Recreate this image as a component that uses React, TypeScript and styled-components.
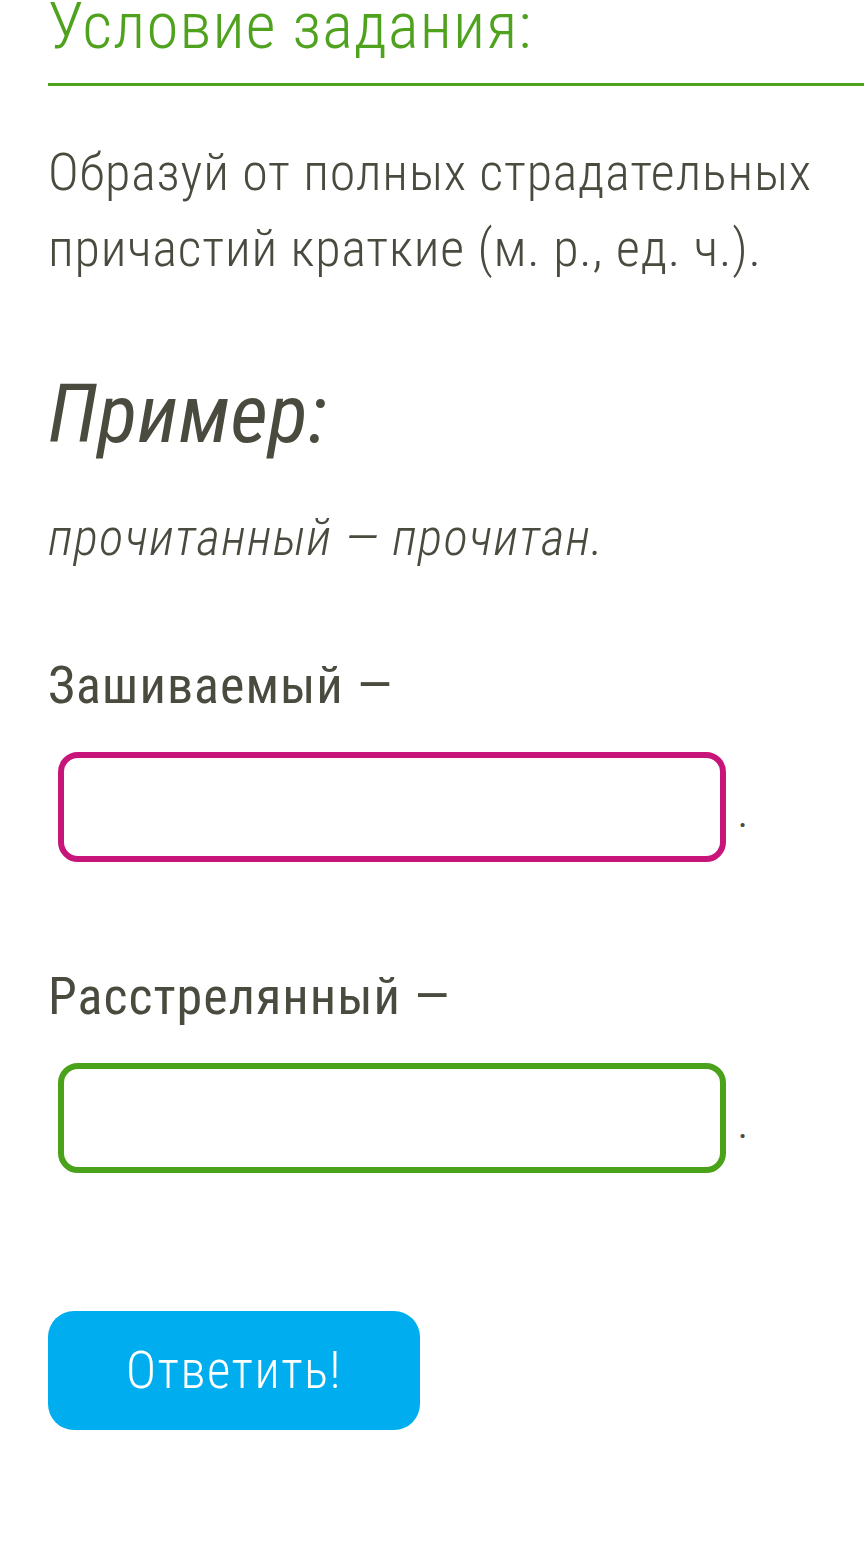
import React from "react";
import styled, { createGlobalStyle } from "styled-components";

const GlobalStyle = createGlobalStyle`
    body {
        margin: 0;
        background: #ffffff;
        font-family: "Roboto Condensed", "Liberation Sans Narrow", Roboto, sans-serif;
        color: #4a4a3f;
        letter-spacing: 1.2px;
    }
`;

const Page = styled.div`
    padding: 0 0 40px 48px;
    display: flex;
    flex-direction: column;
    align-items: flex-start;
`;

const Title = styled.h1`
    align-self: stretch;
    margin: -14px 0 0;
    padding-bottom: 17px;
    font-weight: 300;
    font-size: 65px;
    line-height: 80px;
    letter-spacing: 1.1px;
    color: #4fa21e;
    border-bottom: 3px solid #4fa21e;
`;

const Task = styled.p`
    margin: 49px 0 0;
    font-size: 52px;
    font-weight: 300;
    line-height: 76px;
    letter-spacing: 0.85px;
`;

const ExampleHead = styled.h2`
    margin: 79px 0 0;
    font-size: 82px;
    font-weight: 400;
    font-style: italic;
    line-height: 96px;
    letter-spacing: 0.5px;
`;

const ExampleText = styled.p`
    margin: 41px 0 0;
    font-size: 51px;
    font-weight: 300;
    font-style: italic;
    line-height: 70px;
    letter-spacing: 1.3px;
`;

const Question = styled.div<{ $first?: boolean }>`
    margin-top: ${(p) => (p.$first ? 78 : 100)}px;
    display: flex;
    flex-direction: column;
`;

const Label = styled.div`
    font-size: 52px;
    font-weight: 400;
    line-height: 70px;
    letter-spacing: 1px;
`;

const AnswerRow = styled.div`
    margin-top: 31px;
    display: flex;
    align-items: center;
    gap: 12px;
    padding-left: 10px;
`;

const Field = styled.input<{ $color: string }>`
    width: 668px;
    height: 110px;
    box-sizing: border-box;
    border: 6px solid ${(p) => p.$color};
    border-radius: 20px;
    background: #fff;
    outline: none;
    font-size: 40px;
    padding: 0 20px;
`;

const Dot = styled.span`
    font-size: 36px;
    line-height: 36px;
    padding-top: 16px;
`;

const Submit = styled.button`
    margin-top: 138px;
    width: 372px;
    height: 119px;
    border: none;
    border-radius: 26px;
    background: #00aeef;
    color: #ffffff;
    font-family: inherit;
    font-size: 51px;
    font-weight: 300;
    letter-spacing: 1.5px;
    cursor: pointer;
`;

const questions = [
    { label: "Зашиваемый —", color: "#c8157a" },
    { label: "Расстрелянный —", color: "#4aa11a" },
];

export default function App() {
    return (
        <>
            <GlobalStyle />
            <Page>
                <Title>Условие задания:</Title>
                <Task>
                    Образуй от полных страдательных
                    <br />
                    причастий краткие (м. р., ед. ч.).
                </Task>
                <ExampleHead>Пример:</ExampleHead>
                <ExampleText>прочитанный — прочитан.</ExampleText>
                {questions.map((q, i) => (
                    <Question key={q.label} $first={i === 0}>
                        <Label>{q.label}</Label>
                        <AnswerRow>
                            <Field $color={q.color} />
                            <Dot>.</Dot>
                        </AnswerRow>
                    </Question>
                ))}
                <Submit>Ответить!</Submit>
            </Page>
        </>
    );
}
